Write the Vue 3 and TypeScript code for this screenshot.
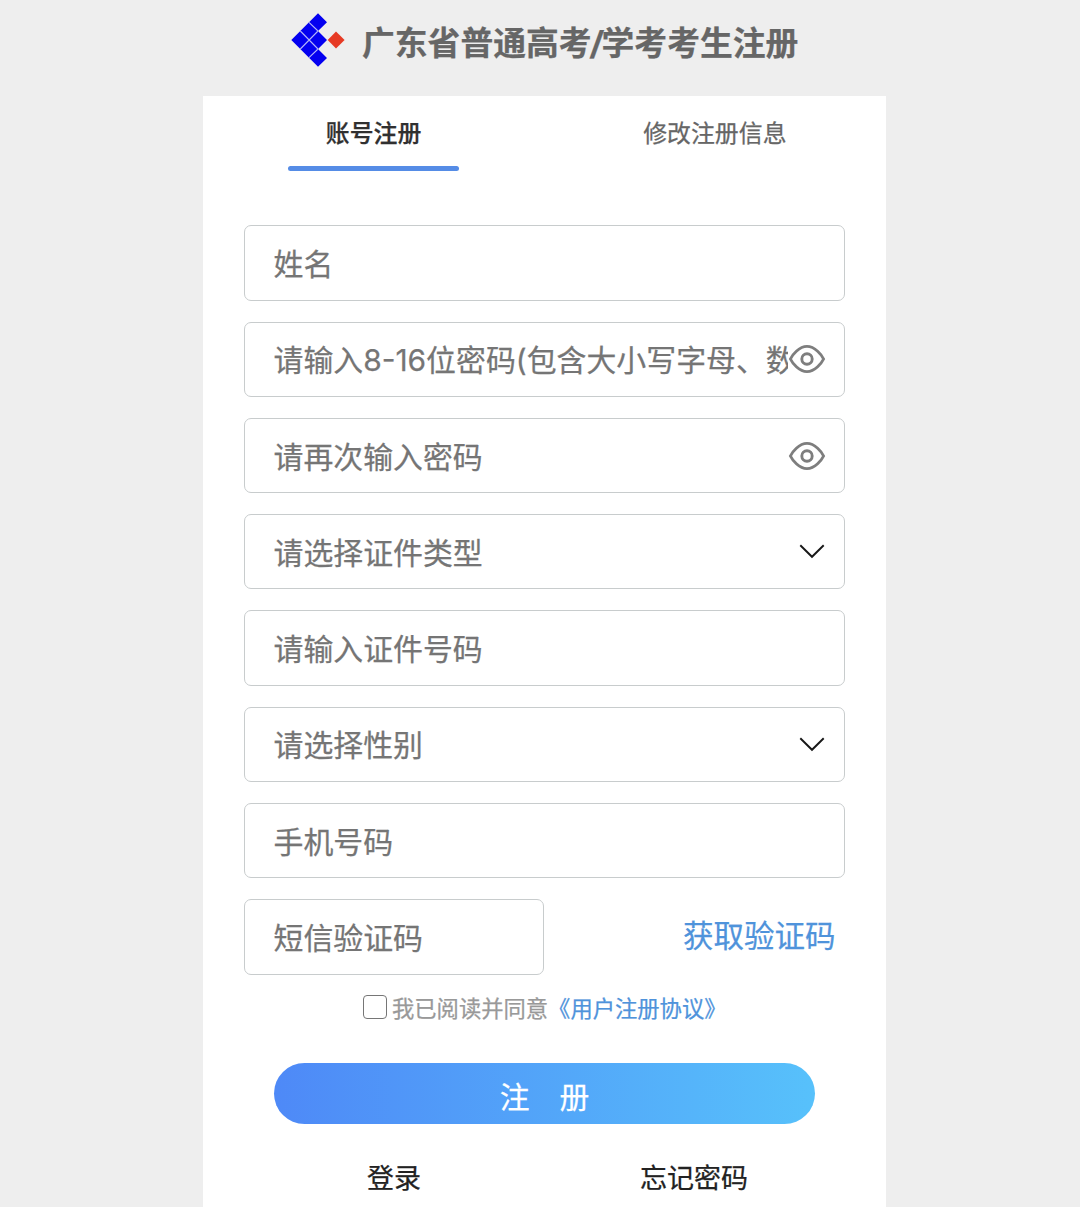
<script setup lang="ts">
import { ref } from 'vue'

type FieldKind = 'text' | 'password' | 'select'

interface Field {
  id: string
  kind: FieldKind
  placeholder: string
}

const tabs: string[] = ['账号注册', '修改注册信息']
const activeTab = ref(0)

const fields: Field[] = [
  { id: 'name', kind: 'text', placeholder: '姓名' },
  { id: 'password', kind: 'password', placeholder: '请输入8-16位密码(包含大小写字母、数字)' },
  { id: 'confirm', kind: 'password', placeholder: '请再次输入密码' },
  { id: 'idType', kind: 'select', placeholder: '请选择证件类型' },
  { id: 'idNumber', kind: 'text', placeholder: '请输入证件号码' },
  { id: 'gender', kind: 'select', placeholder: '请选择性别' },
  { id: 'phone', kind: 'text', placeholder: '手机号码' },
]

const values = ref<Record<string, string>>({})
const visible = ref<Record<string, boolean>>({})
const agreed = ref(false)

function inputType(field: Field): string {
  return field.kind === 'password' && !visible.value[field.id] ? 'password' : 'text'
}
</script>

<template>
  <div class="page">
    <header class="header">
      <svg class="logo" viewBox="0 0 54 54" aria-hidden="true">
        <path d="M27 0.3 36 9.2 27 18 36 27 27 36 36 45 27 53.7 0.3 27Z" fill="#0400f0" />
        <path
          d="M18 9.3 27 18M9.3 18 27 36M9.3 36 27 18M18 44.7 27 36"
          stroke="#b4b4f8"
          stroke-width="1.1"
          fill="none"
        />
        <path d="M45 18.4 53.6 27 45 35.6 36.7 27Z" fill="#e63a24" />
      </svg>
      <h1>广东省普通高考<span class="slash">/</span>学考考生注册</h1>
    </header>

    <main class="panel">
      <nav class="tabs">
        <button
          v-for="(tab, i) in tabs"
          :key="tab"
          type="button"
          class="tab"
          :class="{ active: activeTab === i }"
          @click="activeTab = i"
        >
          <span>{{ tab }}</span>
        </button>
      </nav>

      <form class="form" @submit.prevent>
        <div v-for="field in fields" :key="field.id" class="field">
          <input
            v-model="values[field.id]"
            :type="inputType(field)"
            :placeholder="field.placeholder"
            :readonly="field.kind === 'select'"
          />
          <svg
            v-if="field.kind === 'password'"
            class="eye"
            viewBox="0 0 38 30"
            @click="visible[field.id] = !visible[field.id]"
          >
            <path d="M2.4 15C4.2 11.2 11 2.4 19 2.4S33.8 11.2 35.6 15C33.8 18.8 27 27.6 19 27.6S4.2 18.8 2.4 15Z" />
            <circle cx="19" cy="15" r="5.2" />
          </svg>
          <svg v-else-if="field.kind === 'select'" class="chevron" viewBox="0 0 26 15">
            <path d="M1.3 1.3 13 12.8 24.7 1.3" />
          </svg>
        </div>

        <div class="code-row">
          <div class="field code">
            <input v-model="values.code" placeholder="短信验证码" />
          </div>
          <a class="get-code">获取验证码</a>
        </div>

        <label class="agree">
          <input v-model="agreed" type="checkbox" />
          <span>我已阅读并同意</span>
          <a>《用户注册协议》</a>
        </label>

        <button class="submit" type="submit">
          <span>注</span>
          <span>册</span>
        </button>
      </form>

      <footer class="links">
        <a>登录</a>
        <a>忘记密码</a>
      </footer>
    </main>
  </div>
</template>

<style>
body {
  background: #eeeeee;
}
</style>

<style scoped>
.page,
.page * {
  box-sizing: border-box;
}

.page {
  height: 1207px;
  overflow: hidden;
  background: #eeeeee;
  font-family: Inter, 'Noto Sans CJK SC', sans-serif;
  -webkit-text-stroke: 0.25px currentColor;
}

.page input,
.page button {
  font-family: inherit;
}

.header {
  display: flex;
  align-items: center;
  height: 96px;
  padding: 0 0 16px 290.5px;
}

.logo {
  width: 54px;
  height: 54px;
}

h1 {
  margin: 5px 0 0 17.5px;
  color: #666666;
  font-size: 32.8px;
  font-weight: 700;
  line-height: 48px;
  white-space: nowrap;
}

.slash {
  display: inline-block;
  width: 10px;
  text-indent: -1.5px;
  transform: skewX(-5deg);
}

.panel {
  width: 683px;
  height: 1111px;
  margin-left: 203px;
  padding: 0 41.5px 0 41px;
  background: #ffffff;
}

.tabs {
  display: flex;
  height: 75px;
  margin: 0 -41px;
}

.tab {
  display: flex;
  flex: 1;
  flex-direction: column;
  align-items: center;
  justify-content: space-between;
  padding: 20px 0 0;
  border: 0;
  background: none;
  color: #666666;
  font-size: 23.9px;
  line-height: 36px;
}

.tab.active {
  color: #303030;
  font-weight: 500;
}

.tab.active::after {
  width: 171px;
  height: 5.5px;
  border-radius: 3px;
  background: #558ce6;
  content: '';
}

.form {
  padding-top: 54.3px;
}

.field {
  display: flex;
  align-items: center;
  height: 75.3px;
  margin-bottom: 21px;
  padding: 0 19px 0 28.5px;
  border: 1.5px solid #c8cccd;
  border-radius: 7px;
  background: #ffffff;
}

.field input {
  flex: 1;
  min-width: 0;
  height: 48px;
  padding: 2px 0 0;
  border: 0;
  outline: 0;
  background: none;
  color: #333333;
  font-size: 29.9px;
}

.field input::placeholder {
  color: #757575;
  opacity: 1;
}

.eye {
  flex: none;
  width: 38px;
  height: 30px;
  margin-right: -1px;
}

.eye path,
.eye circle {
  fill: none;
  stroke: #7e7e7e;
  stroke-width: 2.9;
}

.chevron {
  flex: none;
  width: 26px;
  height: 15px;
}

.chevron path {
  fill: none;
  stroke: #181818;
  stroke-width: 1.9;
}

.code-row {
  display: flex;
  align-items: center;
  justify-content: space-between;
  height: 75.3px;
  padding-right: 9px;
}

.code {
  width: 300px;
  margin: 0;
}

.get-code {
  margin-top: -2px;
  color: #4f93db;
  font-size: 30.5px;
  line-height: 46px;
}

.agree {
  display: flex;
  align-items: center;
  height: 34px;
  margin-top: 16px;
  padding-left: 119px;
  color: #999999;
  font-size: 22.3px;
  line-height: 34px;
  white-space: nowrap;
}

.agree span,
.agree a {
  padding-top: 2px;
}

.agree input {
  width: 24px;
  height: 24px;
  margin: 0 5px 2px 0;
  border: 1.6px solid #767676;
  border-radius: 4px;
  appearance: none;
}

.agree input:checked {
  background: #4f93db;
}

.agree a {
  color: #4f93db;
}

.submit {
  display: flex;
  align-items: center;
  justify-content: center;
  gap: 30px;
  width: 541px;
  height: 61px;
  margin: 38px 0 0 30px;
  padding: 7px 0 0;
  border: 0;
  border-radius: 31px;
  background: linear-gradient(90deg, #4e89f7, #57c1fb);
  color: #ffffff;
  font-size: 29.8px;
  line-height: 44px;
}

.links {
  display: flex;
  margin: 35px -41px 0;
  color: #222222;
  font-size: 27px;
  line-height: 40px;
}

.links a:first-child {
  margin-left: 164px;
}

.links a:last-child {
  margin-left: 219px;
}
</style>
